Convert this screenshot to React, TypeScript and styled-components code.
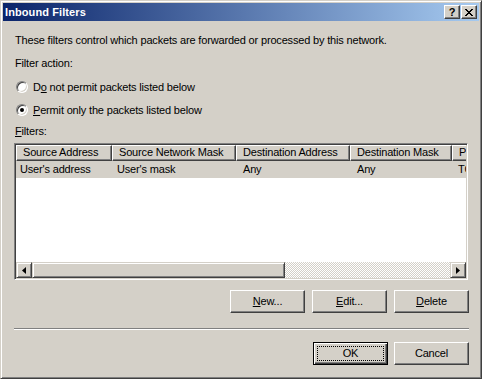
import React from "react";
import styled, { createGlobalStyle } from "styled-components";

const GlobalStyle = createGlobalStyle`
  html, body {
    margin: 0;
    padding: 0;
    background: #d4d0c8;
  }
  body {
    font-family: "Liberation Sans", Arial, sans-serif;
    font-size: 11px;
    letter-spacing: -0.17px;
    color: #000;
  }
`;

const Window = styled.div`
  box-sizing: border-box;
  width: 482px;
  height: 379px;
  padding: 2px;
  background: #d4d0c8;
  border: 1px solid;
  border-color: #d4d0c8 #404040 #404040 #d4d0c8;
  box-shadow: inset 1px 1px #fff, inset -1px -1px #808080;
  display: flex;
  flex-direction: column;
`;

const TitleBar = styled.div`
  height: 18px;
  display: flex;
  align-items: center;
  padding: 0 2px 0 2px;
  background: linear-gradient(to right, #0a246a, #a6caf0);
`;

const Title = styled.div`
  flex: 1;
  color: #fff;
  font-weight: bold;
  font-size: 11px;
  letter-spacing: 0.1px;
`;

const CaptionButton = styled.div<{ $gap?: number }>`
  box-sizing: border-box;
  width: 16px;
  height: 14px;
  margin-left: ${(p) => p.$gap ?? 0}px;
  background: #d4d0c8;
  border: 1px solid;
  border-color: #fff #404040 #404040 #fff;
  box-shadow: inset -1px -1px #808080;
  display: flex;
  align-items: center;
  justify-content: center;
  font-weight: bold;
  font-size: 11px;
  line-height: 1;
`;

const Body = styled.div`
  flex: 1;
  display: flex;
  flex-direction: column;
  padding: 13px 10px 0 11px;
`;

const Label = styled.div<{ $mt?: number }>`
  line-height: 13px;
  margin-top: ${(p) => p.$mt ?? 0}px;
  padding-left: 1px;
`;

const RadioRow = styled.div<{ $mt?: number }>`
  display: flex;
  align-items: center;
  height: 14px;
  margin-top: ${(p) => p.$mt ?? 0}px;
  padding-left: 2px;
`;

const RadioCircle = styled.span<{ $checked?: boolean }>`
  box-sizing: border-box;
  position: relative;
  width: 12px;
  height: 12px;
  border-radius: 50%;
  background: #fff;
  border: 1px solid;
  border-color: #808080 #fff #fff #808080;
  box-shadow: inset 1px 1px #404040, inset -1px -1px #d4d0c8;
  margin-right: 5px;

  &::after {
    content: "";
    display: ${(p) => (p.$checked ? "block" : "none")};
    position: absolute;
    left: 3px;
    top: 3px;
    width: 4px;
    height: 4px;
    border-radius: 50%;
    background: #000;
  }
`;

const ListBox = styled.div`
  box-sizing: border-box;
  margin-top: 5px;
  width: 454px;
  height: 137px;
  background: #fff;
  border: 1px solid;
  border-color: #808080 #fff #fff #808080;
  box-shadow: inset 1px 1px #404040, inset -1px -1px #d4d0c8;
  padding: 1px;
  display: flex;
  flex-direction: column;
  overflow: hidden;
`;

const Grid = styled.div`
  flex: 1;
  overflow: hidden;
`;

const HeaderRow = styled.div`
  display: flex;
  height: 16px;
  width: 600px;
`;

const HeaderCell = styled.div<{ $w: number }>`
  box-sizing: border-box;
  flex: 0 0 ${(p) => p.$w}px;
  height: 16px;
  background: #d4d0c8;
  border-top: 1px solid #fff;
  border-left: 1px solid #fff;
  border-right: 1px solid #404040;
  border-bottom: 1px solid #404040;
  box-shadow: inset -1px -1px #808080;
  padding-left: 6px;
  line-height: 13px;
  white-space: nowrap;
  overflow: hidden;
`;

const DataRow = styled.div`
  display: flex;
  height: 17px;
  width: 600px;
  background: #d4d0c8;
`;

const DataCell = styled.div<{ $w: number; $pad: number }>`
  flex: 0 0 ${(p) => p.$w}px;
  box-sizing: border-box;
  padding-left: ${(p) => p.$pad}px;
  line-height: 17px;
  white-space: nowrap;
  overflow: hidden;
`;

const ScrollBar = styled.div`
  display: flex;
  height: 16px;
`;

const ScrollButton = styled.div<{ $w: number }>`
  box-sizing: border-box;
  flex: 0 0 ${(p) => p.$w}px;
  height: 16px;
  background: #d4d0c8;
  border: 1px solid;
  border-color: #d4d0c8 #404040 #404040 #d4d0c8;
  box-shadow: inset 1px 1px #fff, inset -1px -1px #808080;
  display: flex;
  align-items: center;
  justify-content: center;
`;

const Trough = styled.div`
  flex: 1;
  background: repeating-conic-gradient(#fff 0 25%, #d4d0c8 0 50%) 0 0 / 2px 2px;
`;

const ButtonRow = styled.div<{ $mt: number }>`
  display: flex;
  justify-content: flex-end;
  margin-top: ${(p) => p.$mt}px;
`;

const Button = styled.div<{ $ml?: number; $default?: boolean }>`
  box-sizing: border-box;
  position: relative;
  width: 75px;
  height: 23px;
  margin-left: ${(p) => p.$ml ?? 0}px;
  background: #d4d0c8;
  border: 1px solid;
  border-color: ${(p) =>
    p.$default ? "#000" : "#fff #404040 #404040 #fff"};
  box-shadow: ${(p) =>
    p.$default
      ? "inset 1px 1px #fff, inset -1px -1px #404040, inset -2px -2px #808080"
      : "inset -1px -1px #808080"};
  display: flex;
  align-items: center;
  justify-content: center;
  line-height: 13px;

  &::after {
    content: "";
    display: ${(p) => (p.$default ? "block" : "none")};
    position: absolute;
    left: 3px;
    top: 3px;
    right: 3px;
    bottom: 3px;
    border: 1px dotted #000;
  }
`;

const Separator = styled.div`
  margin-top: 15px;
  height: 0;
  border-top: 1px solid #808080;
  border-bottom: 1px solid #fff;
`;

const Ul = styled.span`
  text-decoration: underline;
`;

const columns = [
  { title: "Source Address", w: 96, pad: 4, value: "User's address" },
  { title: "Source Network Mask", w: 124, pad: 5, value: "User's mask" },
  { title: "Destination Address", w: 114, pad: 7, value: "Any" },
  { title: "Destination Mask", w: 102, pad: 7, value: "Any" },
  { title: "Protocol", w: 80, pad: 6, value: "TCP" },
];

const LeftArrow = () => (
  <svg width="4" height="7" viewBox="0 0 4 7">
    <path d="M4 0 L0 3.5 L4 7 Z" fill="#000" />
  </svg>
);

const RightArrow = () => (
  <svg width="4" height="7" viewBox="0 0 4 7">
    <path d="M0 0 L4 3.5 L0 7 Z" fill="#000" />
  </svg>
);

const CloseGlyph = () => (
  <svg width="8" height="7" viewBox="0 0 8 7">
    <path
      d="M0 0h2v1h-2zM6 0h2v1h-2zM1 1h2v1h-2zM5 1h2v1h-2zM2 2h4v1h-4zM3 3h2v1h-2zM2 4h4v1h-4zM1 5h2v1h-2zM5 5h2v1h-2zM0 6h2v1h-2zM6 6h2v1h-2z"
      fill="#000"
    />
  </svg>
);

const App = () => {
  return (
    <>
      <GlobalStyle />
      <Window>
        <TitleBar>
          <Title>Inbound Filters</Title>
          <CaptionButton>?</CaptionButton>
          <CaptionButton $gap={1}>
            <CloseGlyph />
          </CaptionButton>
        </TitleBar>
        <Body>
          <Label>
            These filters control which packets are forwarded or processed by
            this network.
          </Label>
          <Label $mt={10}>Filter action:</Label>
          <RadioRow $mt={10}>
            <RadioCircle />
            <span>
              D<Ul>o</Ul> not permit packets listed below
            </span>
          </RadioRow>
          <RadioRow $mt={9}>
            <RadioCircle $checked />
            <span>
              <Ul>P</Ul>ermit only the packets listed below
            </span>
          </RadioRow>
          <Label $mt={8}>
            <Ul>F</Ul>ilters:
          </Label>
          <ListBox>
            <Grid>
              <HeaderRow>
                {columns.map((c) => (
                  <HeaderCell key={c.title} $w={c.w}>
                    {c.title}
                  </HeaderCell>
                ))}
              </HeaderRow>
              <DataRow>
                {columns.map((c) => (
                  <DataCell key={c.title} $w={c.w} $pad={c.pad}>
                    {c.value}
                  </DataCell>
                ))}
              </DataRow>
            </Grid>
            <ScrollBar>
              <ScrollButton $w={16}>
                <LeftArrow />
              </ScrollButton>
              <ScrollButton $w={253} />
              <Trough />
              <ScrollButton $w={16}>
                <RightArrow />
              </ScrollButton>
            </ScrollBar>
          </ListBox>
          <ButtonRow $mt={10}>
            <Button>
              <span>
                <Ul>N</Ul>ew...
              </span>
            </Button>
            <Button $ml={7}>
              <span>
                <Ul>E</Ul>dit...
              </span>
            </Button>
            <Button $ml={7}>
              <span>
                <Ul>D</Ul>elete
              </span>
            </Button>
          </ButtonRow>
          <Separator />
          <ButtonRow $mt={12}>
            <Button $default>OK</Button>
            <Button $ml={6}>Cancel</Button>
          </ButtonRow>
        </Body>
      </Window>
    </>
  );
};

export default App;
